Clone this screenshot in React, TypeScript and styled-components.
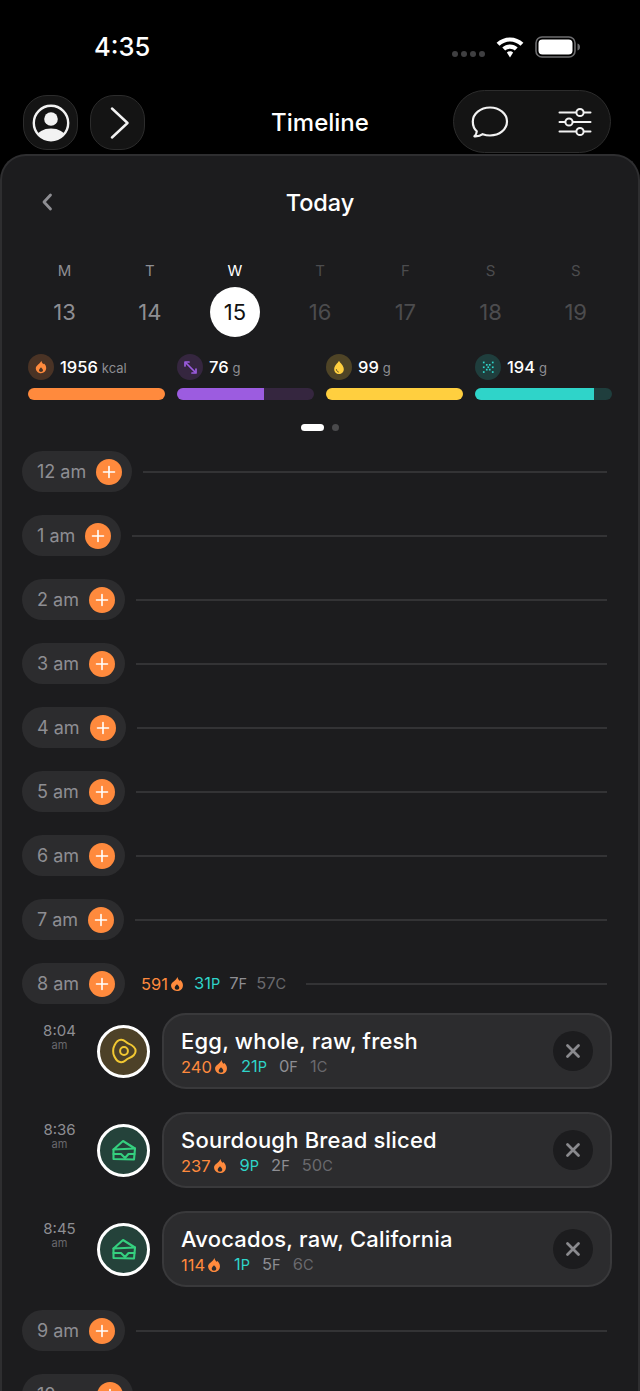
import React from "react";
import styled, { createGlobalStyle } from "styled-components";

const GlobalStyle = createGlobalStyle`
  html, body {
    margin: 0;
    padding: 0;
    background: #000;
  }
  * {
    box-sizing: border-box;
  }
`;

const ORANGE = "#ff8a3d";
const TEAL = "#2fd4c9";
const GRAY = "#8e8e93";
const DIM = "#69696d";

const Page = styled.div`
  width: 640px;
  height: 1391px;
  overflow: hidden;
  background: #000;
  color: #fff;
  font-family: Inter, "Liberation Sans", sans-serif;
`;

const StatusBar = styled.div`
  height: 90px;
  display: flex;
  justify-content: space-between;
  align-items: flex-start;
  padding: 32px 59px 0 94px;
`;

const Clock = styled.div`
  font-size: 25.5px;
  line-height: 30px;
  font-weight: 500;
`;

const StatusIcons = styled.div`
  display: flex;
  align-items: center;
  gap: 11px;
  margin-top: 4px;
`;

const SignalDots = styled.div`
  display: flex;
  gap: 3px;
  margin-top: 14px;
`;

const SignalDot = styled.span`
  width: 6px;
  height: 6px;
  border-radius: 50%;
  background: #3f3f41;
`;

const Header = styled.header`
  height: 64px;
  display: flex;
  align-items: flex-start;
  justify-content: space-between;
  padding: 0 29px 0 23px;
  position: relative;
`;

const RoundGroup = styled.div`
  display: flex;
  gap: 12px;
  padding-top: 5px;
`;

const SquircleButton = styled.div`
  width: 55px;
  height: 55px;
  border-radius: 24px;
  background: #141414;
  border: 1px solid #2c2c2c;
  display: flex;
  align-items: center;
  justify-content: center;
`;

const Title = styled.h1`
  position: absolute;
  left: 0;
  right: 0;
  top: 16px;
  margin: 0;
  text-align: center;
  font-size: 24px;
  line-height: 34px;
  font-weight: 500;
`;

const ActionPill = styled.div`
  width: 158px;
  height: 63px;
  border-radius: 32px;
  background: #141414;
  border: 1px solid #2c2c2c;
  display: flex;
  align-items: center;
  justify-content: space-between;
  padding: 0 18px 0 17px;
  position: relative;
  z-index: 1;
`;

const Panel = styled.main`
  background: #1c1c1e;
  border: 2px solid #2e2e30;
  border-bottom: none;
  border-radius: 26px 26px 0 0;
  height: 1237px;
  overflow: hidden;
`;

const PanelHead = styled.div`
  height: 92px;
  position: relative;
  display: flex;
  align-items: center;
  justify-content: center;
  font-size: 23.5px;
  font-weight: 500;
`;

const BackIcon = styled.svg`
  position: absolute;
  left: 39px;
  top: 37px;
`;

const WeekGrid = styled.div`
  display: grid;
  grid-template-columns: repeat(7, 85.2px);
  padding-left: 20px;
  margin-top: 13px;
`;

const DayCell = styled.div`
  display: flex;
  flex-direction: column;
  align-items: center;
`;

const DayLetter = styled.div<{ $tone: string }>`
  font-size: 15px;
  line-height: 20px;
  color: ${(p) => p.$tone};
`;

const DayNumber = styled.div<{ $tone: string; $active?: boolean }>`
  width: 50px;
  height: 50px;
  margin-top: 6px;
  border-radius: 50%;
  display: flex;
  align-items: center;
  justify-content: center;
  font-size: 22px;
  color: ${(p) => (p.$active ? "#111" : p.$tone)};
  background: ${(p) => (p.$active ? "#fff" : "transparent")};
`;

const MacroGrid = styled.div`
  display: grid;
  grid-template-columns: repeat(4, 137px);
  gap: 12px;
  padding-left: 26px;
  margin-top: 17px;
`;

const MacroCell = styled.div`
  display: flex;
  flex-direction: column;
  gap: 8px;
`;

const MacroHead = styled.div`
  display: flex;
  align-items: center;
  gap: 6px;
  height: 26px;
`;

const MacroIcon = styled.div<{ $bg: string }>`
  width: 26px;
  height: 26px;
  border-radius: 50%;
  background: ${(p) => p.$bg};
  display: flex;
  align-items: center;
  justify-content: center;
`;

const MacroValue = styled.span`
  font-size: 16.5px;
  font-weight: 500;
`;

const MacroUnit = styled.span`
  font-size: 13px;
  color: ${GRAY};
  margin-left: 4px;
`;

const BarTrack = styled.div<{ $bg: string }>`
  height: 12px;
  border-radius: 6px;
  background: ${(p) => p.$bg};
  overflow: hidden;
`;

const BarFill = styled.div<{ $color: string }>`
  height: 100%;
  background: ${(p) => p.$color};
`;

const Pager = styled.div`
  display: flex;
  justify-content: center;
  align-items: center;
  gap: 8px;
  margin-top: 24px;
  margin-bottom: 20px;
  padding-right: 1px;
`;

const PagerActive = styled.span`
  width: 23px;
  height: 7px;
  border-radius: 4px;
  background: #fff;
`;

const PagerDot = styled.span`
  width: 7px;
  height: 7px;
  border-radius: 50%;
  background: #4a4a4c;
`;

const Timeline = styled.div`
  display: flex;
  flex-direction: column;
  padding: 0 31px 0 20px;
`;

const HourRow = styled.div`
  display: flex;
  align-items: center;
  height: 41px;
  margin-bottom: 23px;
`;

const HourPill = styled.div`
  flex: none;
  height: 41px;
  border-radius: 21px;
  background: #2c2c2e;
  display: flex;
  align-items: center;
  gap: 10px;
  padding: 0 10px 0 15px;
  font-size: 18px;
  color: ${GRAY};
`;

const AddButton = styled.div`
  width: 26px;
  height: 26px;
  border-radius: 50%;
  background: ${ORANGE};
  display: flex;
  align-items: center;
  justify-content: center;
`;

const HourLine = styled.div`
  flex: 1;
  height: 2px;
  margin-left: 11px;
  background: #333335;
`;

const HourTotals = styled.div`
  display: flex;
  align-items: center;
  margin-left: 16px;
  margin-right: 9px;
`;

const MacroStrip = styled.div<{ $gap: number }>`
  display: flex;
  align-items: center;
  gap: ${(p) => p.$gap}px;
  font-size: 16.5px;
  line-height: 18px;
`;

const Amount = styled.span<{ $color: string }>`
  display: inline-flex;
  align-items: baseline;
  color: ${(p) => p.$color};
`;

const AmountLetter = styled.span`
  font-size: 14.5px;
`;

const FlameWrap = styled.span`
  display: inline-flex;
  align-self: center;
  margin-left: 1px;
`;

const MealList = styled.div`
  margin-top: -14px;
  margin-right: -5px;
`;

const MealRow = styled.div`
  display: flex;
  align-items: center;
  height: 76px;
  margin-bottom: 23px;
`;

const MealTime = styled.div`
  width: 75px;
  flex: none;
  align-self: flex-start;
  padding-top: 9px;
  text-align: center;
  font-size: 15px;
  line-height: 18px;
  color: ${GRAY};
`;

const MealMeridiem = styled.div`
  font-size: 11px;
  line-height: 11px;
  color: ${DIM};
`;

const MealAvatar = styled.div<{ $bg: string }>`
  width: 53px;
  height: 53px;
  flex: none;
  border-radius: 50%;
  border: 3px solid #fff;
  background: ${(p) => p.$bg};
  display: flex;
  align-items: center;
  justify-content: center;
`;

const MealCard = styled.div`
  flex: 1;
  height: 76px;
  margin-left: 12px;
  border-radius: 24px;
  background: #2c2c2e;
  border: 2px solid #39393b;
  display: flex;
  align-items: center;
  justify-content: space-between;
  padding: 0 17px;
`;

const MealText = styled.div`
  display: flex;
  flex-direction: column;
  gap: 2px;
  padding-top: 2px;
`;

const MealName = styled.div`
  font-size: 22px;
  line-height: 27px;
  font-weight: 500;
  letter-spacing: 0.2px;
`;

const CloseButton = styled.div`
  width: 40px;
  height: 40px;
  border-radius: 50%;
  background: #1c1c1e;
  display: flex;
  align-items: center;
  justify-content: center;
`;

const Flame = ({ size = 16, color = ORANGE }: { size?: number; color?: string }) => (
  <svg width={size} height={size} viewBox="0 0 14 14">
    <path
      fillRule="evenodd"
      d="M7.4 0.8C7.7 2.6 8.6 3.4 9.3 4.2L10 3.4C11.4 4.7 12.2 6.2 12.2 8 12.2 11 9.9 13.2 7 13.2 4.1 13.2 1.8 11 1.8 8.2 1.8 5.4 6.2 4 7.4 0.8ZM7 7.2C6.3 8.2 5 8.9 5 10.3 5 11.4 5.9 12 7 12 8.1 12 9 11.4 9 10.3 9 8.9 7.7 8.2 7 7.2Z"
      fill={color}
    />
  </svg>
);

const ProfileIcon = () => (
  <svg width="38" height="38" viewBox="0 0 38 38">
    <defs>
      <clipPath id="profile-clip">
        <circle cx="19" cy="19" r="17" />
      </clipPath>
    </defs>
    <circle cx="19" cy="19" r="17.2" fill="none" stroke="#f2f2f2" strokeWidth="2.4" />
    <circle cx="19" cy="15" r="6.8" fill="#f2f2f2" />
    <ellipse cx="19" cy="33" rx="14" ry="8.5" fill="#f2f2f2" clipPath="url(#profile-clip)" />
  </svg>
);

const ChevronRightIcon = () => (
  <svg width="22" height="34" viewBox="0 0 22 34">
    <path d="M5 2.5 L20.5 17 L5 31.5" fill="none" stroke="#f2f2f2" strokeWidth="2.4" strokeLinecap="round" strokeLinejoin="round" />
  </svg>
);

const ChatIcon = () => (
  <svg width="38" height="32" viewBox="0 0 38 32">
    <path
      d="M19 1.5C28.6 1.5 36 7.8 36 15.5 36 23.2 28.6 29.5 19 29.5 16.4 29.5 13.9 29 11.7 28.2 9.6 29.8 6.6 30.6 3.4 30.4 4.9 29 5.7 27.4 5.8 25.3 3 22.8 1.8 19.4 1.8 15.5 1.8 7.8 9.4 1.5 19 1.5Z"
      fill="none"
      stroke="#f2f2f2"
      strokeWidth="2.2"
      strokeLinejoin="round"
    />
  </svg>
);

const SlidersIcon = () => (
  <svg width="34" height="30" viewBox="0 0 34 30">
    <g stroke="#f2f2f2" strokeWidth="2" strokeLinecap="round">
      <path d="M1.5 5.5H18M26 5.5H32.5" />
      <path d="M1.5 15H7M15 15H32.5" />
      <path d="M1.5 24.5H18M26 24.5H32.5" />
    </g>
    <g fill="none" stroke="#f2f2f2" strokeWidth="2">
      <circle cx="22" cy="5.5" r="3.6" />
      <circle cx="11" cy="15" r="3.6" />
      <circle cx="22" cy="24.5" r="3.6" />
    </g>
  </svg>
);

const WifiIcon = () => (
  <svg width="28" height="21" viewBox="0 0 28 21">
    <path d="M14 0.5C19.2 0.5 23.8 2.5 27.4 5.8L24.5 8.8C21.7 6.2 18 4.6 14 4.6 10 4.6 6.3 6.2 3.5 8.8L0.6 5.8C4.2 2.5 8.8 0.5 14 0.5Z" fill="#fff" />
    <path d="M14 7.5C16.9 7.5 19.6 8.6 21.7 10.6L18.8 13.5C17.5 12.4 15.8 11.7 14 11.7 12.2 11.7 10.5 12.4 9.2 13.5L6.3 10.6C8.4 8.6 11.1 7.5 14 7.5Z" fill="#fff" />
    <path d="M14 14.3C15.2 14.3 16.3 14.8 17.1 15.6L14 20.5 10.9 15.6C11.7 14.8 12.8 14.3 14 14.3Z" fill="#fff" />
  </svg>
);

const BatteryIcon = () => (
  <svg width="46" height="22" viewBox="0 0 46 22">
    <rect x="1" y="1" width="39" height="20" rx="6" fill="none" stroke="#6d6d6f" strokeWidth="1.6" />
    <rect x="3.5" y="3.5" width="34" height="15" rx="4" fill="#fff" />
    <path d="M42.5 7.5C44.2 8 45 9.4 45 11 45 12.6 44.2 14 42.5 14.5Z" fill="#6d6d6f" />
  </svg>
);

const PlusIcon = () => (
  <svg width="14" height="14" viewBox="0 0 14 14">
    <path d="M7 1.5V12.5M1.5 7H12.5" stroke="#fff" strokeWidth="1.6" strokeLinecap="round" />
  </svg>
);

const CloseIcon = () => (
  <svg width="16" height="16" viewBox="0 0 16 16">
    <path d="M2.5 2.5L13.5 13.5M13.5 2.5L2.5 13.5" stroke="#8a8a8e" strokeWidth="2.8" strokeLinecap="round" />
  </svg>
);

const ProteinIcon = () => (
  <svg width="15" height="15" viewBox="0 0 15 15">
    <g fill="none" stroke="#9c5ce0" strokeWidth="1.7" strokeLinecap="round" strokeLinejoin="round">
      <path d="M3 3L12 12" />
      <path d="M2 6V2H6" />
      <path d="M13 9V13H9" />
    </g>
  </svg>
);

const FatIcon = () => (
  <svg width="14" height="15" viewBox="0 0 14 15">
    <path d="M7 0.8C8.4 3.4 11.8 5.6 11.8 9.2 11.8 12 9.6 14 7 14 4.4 14 2.2 12 2.2 9.2 2.2 5.6 5.6 3.4 7 0.8Z" fill="#ffcf3f" />
    <path d="M4.4 9.6C4.6 10.9 5.3 11.6 6.4 12" stroke="#4f4426" strokeWidth="0.9" fill="none" strokeLinecap="round" />
  </svg>
);

// dotted lattice, the edge midpoints are left out so it reads as an X
const CARB_DOTS = [
  [0, 0], [3, 0],
  [1, 1], [2, 1],
  [0, 2], [3, 2],
  [1, 3], [2, 3],
  [0, 4], [3, 4],
  [1.5, 2],
];

const CarbIcon = () => (
  <svg width="12" height="12" viewBox="0 0 12 12" fill={TEAL}>
    {CARB_DOTS.map(([col, row]) => (
      <rect key={`${col}-${row}`} x={col * 3 + 0.9} y={row * 2.4 + 0.6} width="1.7" height="1.7" />
    ))}
  </svg>
);

const EggIcon = () => (
  <svg width="28" height="28" viewBox="0 0 28 28">
    <path
      d="M11 2.8C14.8 2.6 15.5 5.4 18.5 6.6 22 8 25.6 9.6 25.6 14 25.6 18.4 22 20 18.5 21.4 15.5 22.6 14.8 25.4 11 25.2 6.8 25 5.6 21.8 4.2 19 2.8 16.4 2.8 11.6 4.2 9 5.6 6.2 6.8 3 11 2.8Z"
      fill="none"
      stroke="#f2c832"
      strokeWidth="2"
      strokeLinejoin="round"
    />
    <circle cx="14" cy="14" r="3.9" fill="none" stroke="#f2c832" strokeWidth="2" />
  </svg>
);

const SandwichIcon = () => (
  <svg width="26" height="22" viewBox="0 0 26 22">
    <g fill="none" stroke="#35d07f" strokeWidth="2.1" strokeLinejoin="round" strokeLinecap="round">
      <path d="M2.5 10.5L12 2 24 9.5 2.5 10.5Z" />
      <path d="M2.5 10.5V20L23 20.5 24 9.5" />
      <path d="M2.5 15L10 15 14 19 17.5 15 23.5 15" />
    </g>
  </svg>
);

const DAYS = [
  { letter: "M", num: 13, tone: GRAY, numTone: "#8e8e93" },
  { letter: "T", num: 14, tone: GRAY, numTone: "#8e8e93" },
  { letter: "W", num: 15, tone: "#fff", numTone: "#111", active: true },
  { letter: "T", num: 16, tone: "#4c4c4e", numTone: "#4c4c4e" },
  { letter: "F", num: 17, tone: "#4c4c4e", numTone: "#4c4c4e" },
  { letter: "S", num: 18, tone: "#4c4c4e", numTone: "#4c4c4e" },
  { letter: "S", num: 19, tone: "#4c4c4e", numTone: "#4c4c4e" },
];

const MACROS = [
  { value: "1956", unit: "kcal", color: ORANGE, track: "#4a3325", iconBg: "#4a3325", fill: 100, icon: <Flame size={14} /> },
  { value: "76", unit: "g", color: "#9c5ce0", track: "#35263f", iconBg: "#35263f", fill: 63.5, icon: <ProteinIcon /> },
  { value: "99", unit: "g", color: "#ffcf3f", track: "#4f4426", iconBg: "#4f4426", fill: 100, icon: <FatIcon /> },
  { value: "194", unit: "g", color: TEAL, track: "#1f3e3d", iconBg: "#1f3e3d", fill: 86.5, icon: <CarbIcon /> },
];

const MEALS = [
  { time: "8:04", name: "Egg, whole, raw, fresh", kcal: 240, p: "21", f: "0", c: "1", bg: "#4d4128", icon: <EggIcon /> },
  { time: "8:36", name: "Sourdough Bread sliced", kcal: 237, p: "9", f: "2", c: "50", bg: "#24423a", icon: <SandwichIcon /> },
  { time: "8:45", name: "Avocados, raw, California", kcal: 114, p: "1", f: "5", c: "6", bg: "#24423a", icon: <SandwichIcon /> },
];

type MacrosProps = { kcal: number; p: string; f: string; c: string; gap?: number };

const Macros = ({ kcal, p, f, c, gap = 12 }: MacrosProps) => (
  <MacroStrip $gap={gap}>
    <Amount $color={ORANGE}>
      {kcal}
      <FlameWrap>
        <Flame />
      </FlameWrap>
    </Amount>
    <Amount $color={TEAL}>
      {p}
      <AmountLetter>P</AmountLetter>
    </Amount>
    <Amount $color={GRAY}>
      {f}
      <AmountLetter>F</AmountLetter>
    </Amount>
    <Amount $color={DIM}>
      {c}
      <AmountLetter>C</AmountLetter>
    </Amount>
  </MacroStrip>
);

const Hour = ({ label, children }: { label: string; children?: React.ReactNode }) => (
  <HourRow>
    <HourPill>
      {label}
      <AddButton>
        <PlusIcon />
      </AddButton>
    </HourPill>
    {children}
    <HourLine />
  </HourRow>
);

const App = () => (
  <Page>
    <GlobalStyle />
    <StatusBar>
      <Clock>4:35</Clock>
      <StatusIcons>
        <SignalDots>
          <SignalDot />
          <SignalDot />
          <SignalDot />
          <SignalDot />
        </SignalDots>
        <WifiIcon />
        <BatteryIcon />
      </StatusIcons>
    </StatusBar>
    <Header>
      <RoundGroup>
        <SquircleButton>
          <ProfileIcon />
        </SquircleButton>
        <SquircleButton>
          <ChevronRightIcon />
        </SquircleButton>
      </RoundGroup>
      <Title>Timeline</Title>
      <ActionPill>
        <ChatIcon />
        <SlidersIcon />
      </ActionPill>
    </Header>
    <Panel>
      <PanelHead>
        Today
        <BackIcon width="12" height="18" viewBox="0 0 12 18">
          <path d="M9.5 2L3 9L9.5 16" fill="none" stroke="#8e8e93" strokeWidth="2.8" strokeLinecap="round" strokeLinejoin="round" />
        </BackIcon>
      </PanelHead>
      <WeekGrid>
        {DAYS.map((d) => (
          <DayCell key={d.num}>
            <DayLetter $tone={d.tone}>{d.letter}</DayLetter>
            <DayNumber $tone={d.numTone} $active={d.active}>
              {d.num}
            </DayNumber>
          </DayCell>
        ))}
      </WeekGrid>
      <MacroGrid>
        {MACROS.map((m) => (
          <MacroCell key={m.color}>
            <MacroHead>
              <MacroIcon $bg={m.iconBg}>{m.icon}</MacroIcon>
              <div>
                <MacroValue>{m.value}</MacroValue>
                <MacroUnit>{m.unit}</MacroUnit>
              </div>
            </MacroHead>
            <BarTrack $bg={m.track}>
              <BarFill $color={m.color} style={{ width: `${m.fill}%` }} />
            </BarTrack>
          </MacroCell>
        ))}
      </MacroGrid>
      <Pager>
        <PagerActive />
        <PagerDot />
      </Pager>
      <Timeline>
        {["12 am", "1 am", "2 am", "3 am", "4 am", "5 am", "6 am", "7 am"].map((h) => (
          <Hour key={h} label={h} />
        ))}
        <Hour label="8 am">
          <HourTotals>
            <Macros kcal={591} p="31" f="7" c="57" gap={9} />
          </HourTotals>
        </Hour>
        <MealList>
          {MEALS.map((m) => (
            <MealRow key={m.time}>
              <MealTime>
                {m.time}
                <MealMeridiem>am</MealMeridiem>
              </MealTime>
              <MealAvatar $bg={m.bg}>{m.icon}</MealAvatar>
              <MealCard>
                <MealText>
                  <MealName>{m.name}</MealName>
                  <Macros kcal={m.kcal} p={m.p} f={m.f} c={m.c} />
                </MealText>
                <CloseButton>
                  <CloseIcon />
                </CloseButton>
              </MealCard>
            </MealRow>
          ))}
        </MealList>
        <Hour label="9 am" />
        <Hour label="10 am" />
      </Timeline>
    </Panel>
  </Page>
);

export default App;
